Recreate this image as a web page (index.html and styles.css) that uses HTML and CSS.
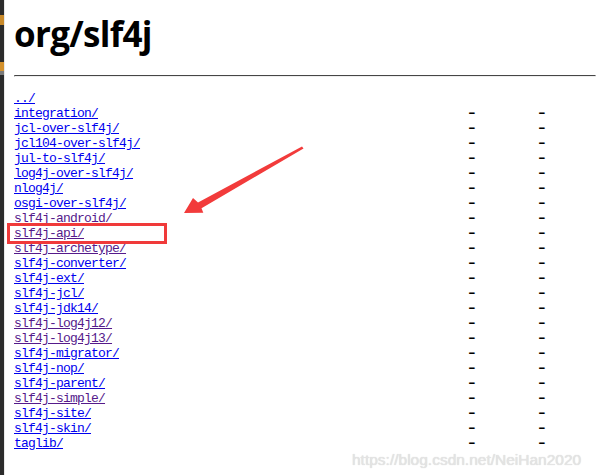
FILE: index.html
```html
<!DOCTYPE html>
<html>

<head>
	<title>Index of /org/slf4j</title>
	<meta charset="utf-8">
	<link rel="stylesheet" href="styles.css">
</head>

<body>
	<div class="page">
		<div class="edge"></div>

		<main class="listing">
			<h1>org/slf4j</h1>
			<hr>
			<section class="rows">
				<div class="row"><a href="#">../</a><span></span><span></span></div>
				<div class="row"><a href="#">integration/</a><span class="dash">-</span><span class="dash">-</span></div>
				<div class="row"><a href="#">jcl-over-slf4j/</a><span class="dash">-</span><span class="dash">-</span></div>
				<div class="row"><a href="#">jcl104-over-slf4j/</a><span class="dash">-</span><span class="dash">-</span></div>
				<div class="row"><a href="#">jul-to-slf4j/</a><span class="dash">-</span><span class="dash">-</span></div>
				<div class="row"><a href="#">log4j-over-slf4j/</a><span class="dash">-</span><span class="dash">-</span></div>
				<div class="row"><a href="#">nlog4j/</a><span class="dash">-</span><span class="dash">-</span></div>
				<div class="row"><a href="#">osgi-over-slf4j/</a><span class="dash">-</span><span class="dash">-</span></div>
				<div class="row"><a class="seen" href="#">slf4j-android/</a><span class="dash">-</span><span class="dash">-</span></div>
				<div class="row"><a class="seen" href="#">slf4j-api/</a><span class="dash">-</span><span class="dash">-</span></div>
				<div class="row"><a class="seen" href="#">slf4j-archetype/</a><span class="dash">-</span><span class="dash">-</span></div>
				<div class="row"><a href="#">slf4j-converter/</a><span class="dash">-</span><span class="dash">-</span></div>
				<div class="row"><a href="#">slf4j-ext/</a><span class="dash">-</span><span class="dash">-</span></div>
				<div class="row"><a href="#">slf4j-jcl/</a><span class="dash">-</span><span class="dash">-</span></div>
				<div class="row"><a href="#">slf4j-jdk14/</a><span class="dash">-</span><span class="dash">-</span></div>
				<div class="row"><a class="seen" href="#">slf4j-log4j12/</a><span class="dash">-</span><span class="dash">-</span></div>
				<div class="row"><a class="seen" href="#">slf4j-log4j13/</a><span class="dash">-</span><span class="dash">-</span></div>
				<div class="row"><a href="#">slf4j-migrator/</a><span class="dash">-</span><span class="dash">-</span></div>
				<div class="row"><a href="#">slf4j-nop/</a><span class="dash">-</span><span class="dash">-</span></div>
				<div class="row"><a href="#">slf4j-parent/</a><span class="dash">-</span><span class="dash">-</span></div>
				<div class="row"><a class="seen" href="#">slf4j-simple/</a><span class="dash">-</span><span class="dash">-</span></div>
				<div class="row"><a href="#">slf4j-site/</a><span class="dash">-</span><span class="dash">-</span></div>
				<div class="row"><a href="#">slf4j-skin/</a><span class="dash">-</span><span class="dash">-</span></div>
				<div class="row"><a href="#">taglib/</a><span class="dash">-</span><span class="dash">-</span></div>
			</section>
		</main>

		<!-- annotation drawn over the screenshot -->
		<div class="mark"></div>
		<svg class="arrow" width="596" height="475" viewBox="0 0 596 475">
			<polygon points="184,213 193,198 198,202.5 302,146.5 303.5,148.5 201.5,208.3 203.3,212.7" fill="#f23b3b" />
		</svg>

		<div class="watermark">https://blog.csdn.net/NeiHan2020</div>
	</div>
</body>

</html>
```

FILE: styles.css
```css
body {
	margin: 0;
	padding: 0;
	background: white;
}

.page {
	position: relative;
	display: flex;
	min-height: 475px;
	overflow: hidden;
}

.edge {
	flex: 0 0 4px;
	background:
		linear-gradient(to bottom,
			#2b2b2b 0 15px,
			#c98a2a 15px 25px,
			#2b2b2b 25px 62px,
			#d4912c 62px 71px,
			#7a7a7a 71px 75px,
			#2b2b2b 75px);
	border-right: 1px solid #e9e9e9;
}

.listing {
	flex: 1;
	padding-left: 9px;
}

h1 {
	font-family: "Open Sans", "Liberation Sans", sans-serif;
	font-weight: bold;
	font-size: 35px;
	line-height: 40px;
	color: black;
	margin: 14px 0 0 0;
	letter-spacing: -0.7px;
}

hr {
	margin: 21px 0 0 0;
	border: 1px inset #eee;
	border-top-color: #9a9a9a;
}

.rows {
	margin-top: 14px;
	font-family: "Liberation Mono", monospace;
	font-size: 13px;
	letter-spacing: -0.8px;
	line-height: 15px;
}

.row {
	display: grid;
	grid-template-columns: 452px 70px 1fr;
}

.row a {
	color: #0000ee;
}

.row a.seen {
	color: #551a8b;
}

.dash {
	display: inline-block;
	width: 7px;
	font-weight: bold;
	transform: scaleX(1.5);
	transform-origin: left;
	color: black;
}

.mark {
	position: absolute;
	left: 7px;
	top: 223px;
	width: 154px;
	height: 15px;
	border: 3px solid #f03a3a;
}

.arrow {
	position: absolute;
	left: 0;
	top: 0;
}

.watermark {
	position: absolute;
	left: 352px;
	top: 452px;
	line-height: 16px;
	font-family: "Liberation Sans", Arial, sans-serif;
	font-size: 15.5px;
	color: #e4e4e4;
	text-shadow: 0 0 1px #cfcfcf;
}
```
